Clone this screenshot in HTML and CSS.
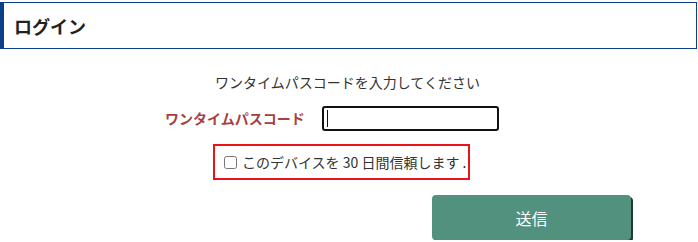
FILE: index.html
```html
<!DOCTYPE html>
<html lang="ja">
<head>
    <meta charset="UTF-8">
    <meta name="viewport" content="width=device-width, initial-scale=1.0">
    <title>ログイン</title>
    <link rel="stylesheet" href="styles.css">
</head>
<body>
    <div class="page-header">
        <h1>ログイン</h1>
    </div>
    <form class="otp-form" onsubmit="return false;">
        <p class="lead">ワンタイムパスコードを入力してください</p>
        <div class="otp-row">
            <label for="otp" class="otp-label">ワンタイムパスコード</label>
            <div class="otp-field">
                <input type="text" id="otp" class="otp-input">
                <span class="caret"></span>
            </div>
        </div>
        <div class="trust-box">
            <label class="trust-label">
                <input type="checkbox" class="trust-check">
                <span>このデバイスを 30 日間信頼します&nbsp;.</span>
            </label>
        </div>
        <div class="actions">
            <button type="submit" class="submit-btn">送信</button>
        </div>
    </form>
</body>
</html>
```

FILE: styles.css
```css
body {
    margin: 0;
    padding-top: 2px;
    font-family: "Noto Sans CJK JP", "Liberation Sans", sans-serif;
    color: #333;
    background-color: #fff;
    width: 698px;
}
.page-header {
    width: 697px;
    height: 47px;
    box-sizing: border-box;
    border: 1px solid #0b3f8c;
    border-left: 4px solid #0b3f8c;
    display: flex;
    align-items: center;
    padding-left: 10px;
}
.page-header h1 {
    margin: 0;
    font-size: 18px;
    font-weight: bold;
    color: #222;
}
.otp-form {
    margin: 0;
}
.lead {
    margin: 23px 0 0 0;
    padding-left: 215px;
    font-size: 14px;
    line-height: 20px;
    height: 20px;
}
.otp-row {
    display: flex;
    align-items: center;
    padding-left: 165px;
    margin-top: 11px;
    height: 30px;
}
.otp-label {
    width: 157px;
    font-size: 14px;
    font-weight: bold;
    color: #a5423f;
}
.otp-field {
    position: relative;
}
.otp-input {
    display: block;
    width: 177px;
    height: 25px;
    box-sizing: border-box;
    border: 2px solid #111;
    border-radius: 3px;
    padding: 0 4px;
    font-size: 14px;
    outline: none;
}
.otp-field .caret {
    position: absolute;
    left: 5px;
    top: 4px;
    width: 1px;
    height: 17px;
    background-color: #111;
}
.trust-box {
    margin: 11px 0 0 213px;
    width: 257px;
    height: 36px;
    box-sizing: border-box;
    border: 2px solid #e8141a;
    display: flex;
    align-items: center;
    padding-left: 9px;
}
.trust-label {
    display: flex;
    align-items: center;
    font-size: 14px;
    color: #333;
    white-space: nowrap;
}
.trust-check {
    margin: 0 5px 0 0;
    width: 13px;
    height: 13px;
}
.actions {
    margin: 15px 0 0 432px;
}
.submit-btn {
    width: 199px;
    height: 45px;
    border: none;
    border-radius: 4px;
    background-color: #53917f;
    color: #fff;
    font-family: "Noto Sans CJK JP", sans-serif;
    font-size: 16px;
    box-shadow: 2px 2px 0 #1f3a33;
    cursor: pointer;
}
.submit-btn:hover {
    background-color: #4a8473;
}
```
